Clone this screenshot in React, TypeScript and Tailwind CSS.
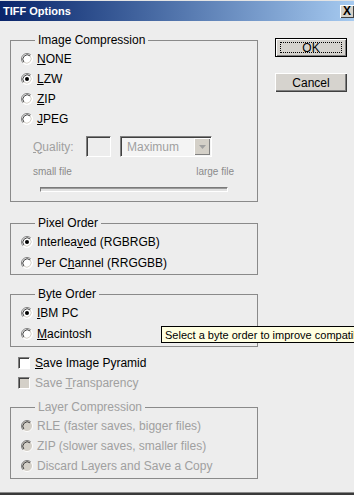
import React from "react";

const FONT = { fontFamily: '"Liberation Sans", Arial, sans-serif' };

type RadioProps = { checked?: boolean; disabled?: boolean };

const Radio = ({ checked, disabled }: RadioProps) => (
  <svg width="12" height="12" viewBox="0 0 12 12" className="shrink-0">
    <circle cx="6" cy="6" r="5.5" fill={disabled ? "#d4d0c8" : "#ffffff"} />
    <path d="M2.1 9.9 A5.5 5.5 0 0 1 9.9 2.1" fill="none" stroke="#808080" strokeWidth="1" />
    <path d="M2.9 9.1 A4.4 4.4 0 0 1 9.1 2.9" fill="none" stroke="#404040" strokeWidth="1" />
    <path d="M9.9 2.1 A5.5 5.5 0 0 1 2.1 9.9" fill="none" stroke="#ffffff" strokeWidth="1" />
    <path d="M9.1 2.9 A4.4 4.4 0 0 1 2.9 9.1" fill="none" stroke="#d4d0c8" strokeWidth="1" />
    {checked && <circle cx="6" cy="6" r="2" fill="#000000" />}
  </svg>
);

const RadioRow = ({
  checked,
  disabled,
  h = "h-[20px]",
  children,
}: RadioProps & { h?: string; children: React.ReactNode }) => (
  <div className={`flex items-center gap-[4px] ${h}`}>
    <Radio checked={checked} disabled={disabled} />
    <span className={`text-[12px] leading-[14px] ${disabled ? "text-[#a0a0a0]" : "text-black"}`}>{children}</span>
  </div>
);

const Checkbox = ({ disabled }: { disabled?: boolean }) => (
  <div
    className={`w-[12px] h-[12px] shrink-0 border border-t-[#808080] border-l-[#808080] border-b-white border-r-white shadow-[inset_1px_1px_0_#404040] ${
      disabled ? "bg-[#d4d0c8]" : "bg-white"
    }`}
  />
);

const Group = ({
  title,
  disabled,
  className,
  children,
}: {
  title: string;
  disabled?: boolean;
  className?: string;
  children: React.ReactNode;
}) => (
  <fieldset className={`border border-[#8a8a8a] pl-[10px] ${className ?? ""}`}>
    <legend
      className={`ml-[14px] px-[3px] text-[12px] leading-[14px] ${disabled ? "text-[#a0a0a0]" : "text-black"}`}
    >
      {title}
    </legend>
    {children}
  </fieldset>
);

const Button = ({ children, isDefault }: { children: React.ReactNode; isDefault?: boolean }) => (
  <div
    className={`h-[19px] w-[72px] bg-[#d6d3ce] flex items-center justify-center ${
      isDefault
        ? "border border-black shadow-[inset_1px_1px_0_#ffffff,inset_-1px_-1px_0_#808080]"
        : "shadow-[inset_1px_1px_0_#ffffff,inset_-1px_-1px_0_#404040,inset_-2px_-2px_0_#808080]"
    }`}
  >
    {isDefault ? (
      <div className="w-[62px] h-[11px] border border-dotted border-black flex items-center justify-center text-[12px] leading-[12px] text-black">
        {children}
      </div>
    ) : (
      <span className="text-[12px] leading-[14px] text-black">{children}</span>
    )}
  </div>
);

export default function App() {
  return (
    <div className="relative w-[354px] h-[495px] overflow-hidden bg-[#ededed] flex flex-col" style={FONT}>
      {/* Title bar */}
      <div className="h-[21px] shrink-0 border-t border-[#e4e4e4] bg-linear-to-r from-[#0a246a] to-[#a6caf0] flex items-center justify-between pl-[3px]">
        <span className="text-white font-bold text-[11px] leading-[14px]">TIFF Options</span>
        <div className="w-[14px] h-[13px] bg-[#d4d0c8] shadow-[inset_1px_1px_0_#ffffff,inset_-1px_-1px_0_#404040] flex items-center justify-center text-[12px] leading-[12px] font-bold text-black">
          X
        </div>
      </div>

      <div className="flex">
        {/* Left column */}
        <div className="ml-[10px] w-[248px] flex flex-col">
          <Group title="Image Compression" className="mt-[12px] pt-[2px] pb-[9px]">
            <RadioRow>
              <u>N</u>ONE
            </RadioRow>
            <RadioRow checked>
              <u>L</u>ZW
            </RadioRow>
            <RadioRow>
              <u>Z</u>IP
            </RadioRow>
            <RadioRow>
              <u>J</u>PEG
            </RadioRow>
            <div className="mt-[7px] h-[21px] pl-[12px] flex items-center">
              <span className="text-[12px] leading-[14px] text-[#a0a0a0] w-[53px]">
                <u>Q</u>uality:
              </span>
              <div className="w-[25px] h-[21px] border border-t-[#808080] border-l-[#808080] border-b-white border-r-white shadow-[inset_1px_1px_0_#404040]" />
              <div className="ml-[9px] w-[92px] h-[21px] bg-[#f4f4f4] border border-t-[#808080] border-l-[#808080] border-b-white border-r-white shadow-[inset_1px_1px_0_#404040] flex items-center justify-between pl-[6px] pr-[1px]">
                <span className="text-[12px] leading-[14px] text-[#a0a0a0]">Maximum</span>
                <div className="w-[16px] h-[17px] bg-[#d4d0c8] shadow-[inset_1px_1px_0_#ffffff,inset_-1px_-1px_0_#808080] flex items-center justify-center">
                  <svg width="7" height="4" viewBox="0 0 7 4">
                    <path d="M0 0 H7 L3.5 4 Z" fill="#a0a0a0" />
                  </svg>
                </div>
              </div>
            </div>
            <div className="mt-[8px] pl-[12px] w-[213px] flex justify-between text-[10px] leading-[13px] text-[#8a8a8a]">
              <span>small file</span>
              <span>large file</span>
            </div>
            <div className="mt-[9px] ml-[19px] w-[188px] h-[5px] border border-t-[#7a7a7a] border-l-[#7a7a7a] border-b-white border-r-white bg-[#e2e2e2] shadow-[inset_0_1px_0_#9a9a9a]" />
          </Group>

          <Group title="Pixel Order" className="mt-[14px] pt-[1px] pb-[1px]">
            <RadioRow checked h="h-[21px]">
              Interlea<u>v</u>ed (RGBRGB)
            </RadioRow>
            <RadioRow h="h-[21px]">
              Per C<u>h</u>annel (RRGGBB)
            </RadioRow>
          </Group>

          <Group title="Byte Order" className="mt-[12px] pt-[1px] pb-[2px]">
            <RadioRow checked h="h-[21px]">
              <u>I</u>BM PC
            </RadioRow>
            <RadioRow h="h-[21px]">
              <u>M</u>acintosh
            </RadioRow>
          </Group>

          <div className="mt-[6px] pl-[8px]">
            <div className="h-[20px] flex items-center gap-[5px]">
              <Checkbox />
              <span className="text-[12px] leading-[14px] text-black">
                <u>S</u>ave Image Pyramid
              </span>
            </div>
            <div className="h-[20px] flex items-center gap-[5px]">
              <Checkbox disabled />
              <span className="text-[12px] leading-[14px] text-[#a0a0a0]">
                Save <u>T</u>ransparency
              </span>
            </div>
          </div>

          <Group title="Layer Compression" disabled className="mt-[7px] pt-[2px] pb-[2px]">
            <RadioRow disabled>RLE (faster saves, bigger files)</RadioRow>
            <RadioRow disabled>ZIP (slower saves, smaller files)</RadioRow>
            <RadioRow disabled>Discard Layers and Save a Copy</RadioRow>
          </Group>
        </div>

        {/* Right column */}
        <div className="ml-[17px] pt-[17px] flex flex-col gap-[16px]">
          <Button isDefault>OK</Button>
          <Button>Cancel</Button>
        </div>
      </div>

      <div className="mt-auto h-[3px] shrink-0 bg-[#3a3a3a] border-t border-[#8a8a8a]" />

      {/* Tooltip, cut off by the window edge as in the capture */}
      <div className="absolute left-[161px] top-[326px] h-[17px] w-[200px] bg-[#ffffe1] border border-black pl-[3px] flex items-center whitespace-nowrap text-[11px] leading-[14px] text-black">
        Select a byte order to improve compatib
      </div>
    </div>
  );
}
